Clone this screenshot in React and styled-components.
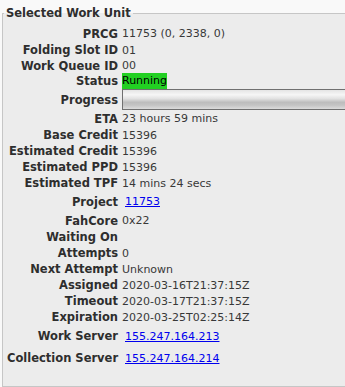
import React from 'react';
import styled, { createGlobalStyle } from 'styled-components';

const GlobalStyle = createGlobalStyle`
  html, body {
    margin: 0;
    padding: 0;
    background: #f9f9f9;
    overflow: hidden;
  }
  body {
    font-family: "DejaVu Sans", Verdana, sans-serif;
    font-size: 11px;
    color: #333333;
  }
`;

const Frame = styled.fieldset`
  margin: 7px 0 0 2px;
  padding: 0;
  width: 380px;
  min-height: 380px;
  border: 1px solid #c6c6c6;
  background: #ececec;
  box-sizing: border-box;
`;

const Title = styled.legend`
  padding: 0 2px;
  margin-left: 1px;
  font-weight: bold;
  font-size: 11.5px;
  line-height: 13px;
  color: #2e2e2e;
`;

const Rows = styled.div`
  display: flex;
  flex-direction: column;
  padding: 5px 0 0 4px;
`;

const Row = styled.div`
  display: grid;
  grid-template-columns: 111px 1fr;
  column-gap: 4px;
  height: ${(p) => p.$h}px;
  align-items: center;
`;

const Label = styled.div`
  text-align: right;
  font-weight: bold;
  font-size: 11.5px;
  color: #2e2e2e;
  white-space: nowrap;
`;

const Value = styled.div`
  color: #383838;
  white-space: nowrap;
  height: 100%;
  display: flex;
  align-items: center;
`;

const StatusBadge = styled.span`
  display: inline-block;
  height: 16px;
  line-height: 16px;
  background: #22d022;
  color: #000000;
`;

const ProgressBar = styled.div`
  height: 21px;
  width: 100%;
  box-sizing: border-box;
  border: 1px solid #707070;
  background: linear-gradient(
    to bottom,
    #e4e4e4 0%,
    #f6f6f6 25%,
    #e2e2e2 45%,
    #bdbdbd 65%,
    #c4c4c4 80%,
    #dcdcdc 100%
  );
`;

const Link = styled.a`
  margin-left: 3px;
  color: #0000ee;
  text-decoration: underline;
`;

const rows = [
  { label: 'PRCG', value: '11753 (0, 2338, 0)', h: 17 },
  { label: 'Folding Slot ID', value: '01', h: 16 },
  { label: 'Work Queue ID', value: '00', h: 15 },
  { label: 'Status', value: 'Running', kind: 'status', h: 16 },
  { label: 'Progress', kind: 'progress', h: 21 },
  { label: 'ETA', value: '23 hours 59 mins', h: 17 },
  { label: 'Base Credit', value: '15396', h: 16 },
  { label: 'Estimated Credit', value: '15396', h: 16 },
  { label: 'Estimated PPD', value: '15396', h: 16 },
  { label: 'Estimated TPF', value: '14 mins 24 secs', h: 16 },
  { label: 'Project', value: '11753', kind: 'link', h: 21 },
  { label: 'FahCore', value: '0x22', h: 17 },
  { label: 'Waiting On', value: '', h: 16 },
  { label: 'Attempts', value: '0', h: 16 },
  { label: 'Next Attempt', value: 'Unknown', h: 16 },
  { label: 'Assigned', value: '2020-03-16T21:37:15Z', h: 16 },
  { label: 'Timeout', value: '2020-03-17T21:37:15Z', h: 16 },
  { label: 'Expiration', value: '2020-03-25T02:25:14Z', h: 16 },
  { label: 'Work Server', value: '155.247.164.213', kind: 'link', h: 22 },
  { label: 'Collection Server', value: '155.247.164.214', kind: 'link', h: 22 },
];

const renderValue = (row) => {
  if (row.kind === 'status') return <StatusBadge>{row.value}</StatusBadge>;
  if (row.kind === 'progress') return <ProgressBar />;
  if (row.kind === 'link') return <Link href="#">{row.value}</Link>;
  return row.value;
};

const App = () => (
  <>
    <GlobalStyle />
    <Frame>
      <Title>Selected Work Unit</Title>
      <Rows>
        {rows.map((row) => (
          <Row key={row.label} $h={row.h}>
            <Label>{row.label}</Label>
            <Value>{renderValue(row)}</Value>
          </Row>
        ))}
      </Rows>
    </Frame>
  </>
);

export default App;
